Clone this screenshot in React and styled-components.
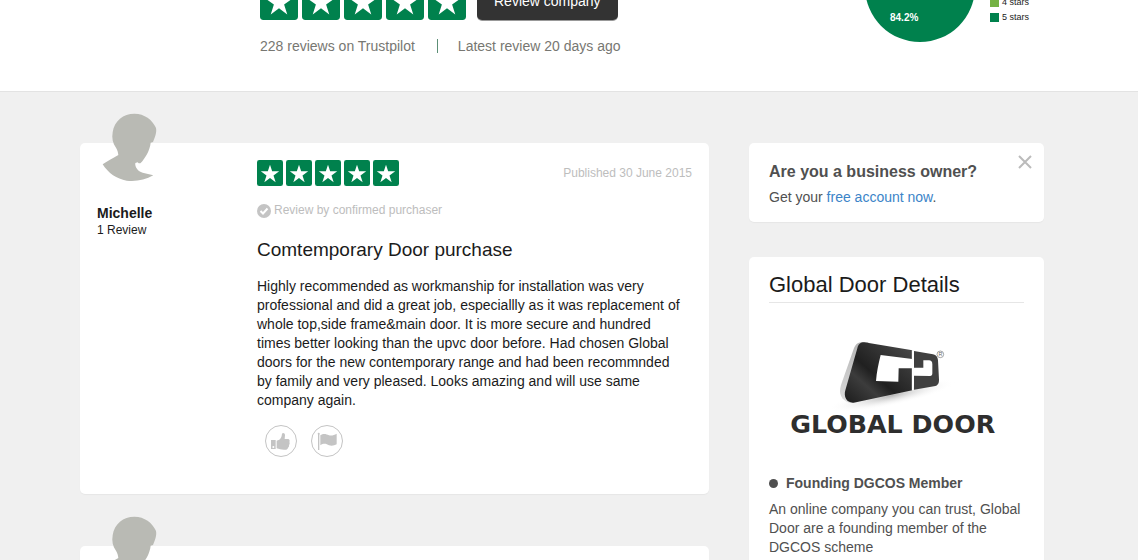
import React from 'react'
import styled, { createGlobalStyle } from 'styled-components'

const GlobalStyle = createGlobalStyle`
  * {
    box-sizing: border-box;
  }

  body {
    margin: 0;
    background-color: #f0f0f0;
    font-family: "Liberation Sans", Arial, sans-serif;
    font-size: 14px;
    line-height: 19px;
    color: #1b1b1b;
  }

  h2, h3, p {
    margin: 0;
  }
`

const reviews = [
  {
    name: "Michelle",
    count: "1 Review",
    date: "Published 30 June 2015",
    title: "Comtemporary Door purchase",
    text: "Highly recommended as workmanship for installation was very professional and did a great job, especiallly as it was replacement of whole top,side frame&main door. It is more secure and hundred times better looking than the upvc door before. Had chosen Global doors for the new contemporary range and had been recommnded by family and very pleased. Looks amazing and will use same company again."
  }
]

function Stars({ size, gap }) {
  return (
    <StarRow $gap={gap} role="img" aria-label="5 stars">
      {[1, 2, 3, 4, 5].map((n) => (
        <svg key={n} width={size} height={size} viewBox="0 0 78 78">
          <rect width="78" height="78" rx="7" fill="#00814d" />
          <path d="M39 14L45.5 34.1L66.6 34L49.5 46.4L56 66.5L39 54L22 66.5L28.5 46.4L11.4 34L32.5 34.1Z" fill="#fff" />
        </svg>
      ))}
    </StarRow>
  )
}

function Avatar() {
  return (
    <AvatarSvg viewBox="51 24 210 225" aria-hidden="true">
      <path
        fill="#b9bab4"
        d="M163 41C194 41 217 60 227 82C231 92 228 106 219 126L212 128C210 150 196 175 181 190H176L173 187L166 189C164 200 174 215 188 218L220 226C196 240 168 245 140 242C110 237 85 220 68 193C82 183 97 175 115 165C114 157 113 151 108 143C98 130 95 115 98 97C103 62 130 41 163 41Z"
      />
    </AvatarSvg>
  )
}

function PieChart() {
  return (
    <svg width="112" height="112" viewBox="0 0 112 112">
      <circle cx="56" cy="56" r="55" fill="#00814d" />
      <path d="M56 56L10 26A55 55 0 0 1 56 1Z" fill="#74b243" stroke="#fff" />
      <text x="26" y="90" fill="#fff" fontSize="10" fontWeight="bold">84.2%</text>
    </svg>
  )
}

function Logo() {
  return (
    <LogoSvg viewBox="-18 0 765 360" role="img" aria-label="Global Door">
      <defs>
        <linearGradient id="door" x1="0" y1="1" x2="1" y2="0">
          <stop offset="0" stopColor="#1c1c1c" />
          <stop offset="0.3" stopColor="#3c3c3c" />
          <stop offset="0.45" stopColor="#202020" />
          <stop offset="1" stopColor="#4c4c4c" />
        </linearGradient>
        <linearGradient id="edge" x1="0" y1="0" x2="0" y2="1">
          <stop offset="0" stopColor="#b5b5b5" />
          <stop offset="1" stopColor="#dcdcdc" />
        </linearGradient>
        <radialGradient id="shade">
          <stop offset="0" stopColor="#b8b8b8" />
          <stop offset="1" stopColor="#fff" stopOpacity="0" />
        </radialGradient>
      </defs>
      <ellipse cx="350" cy="212" rx="195" ry="30" fill="url(#shade)" transform="rotate(-12 350 212)" />
      <path d="M262 52C246 52 241 60 236 72L198 180C190 207 198 224 224 234L250 230L280 52Z" fill="url(#edge)" />
      <path d="M268 52L412 76V196L236 233C216 235 205 216 211 196L247 70C250 57 256 52 268 52Z" fill="url(#door)" />
      <path d="M317 90L412 102V130H371L370 170L303 168C305 142 310 118 317 90Z" fill="#fff" />
      <path d="M417 78L474 88C484 90 488 96 489 106L492 164C492 176 488 182 477 184L417 194V152L465 153C471 153 472 149 472 144V118C472 109 468 106 462 106H445V128H417Z" fill="#404040" />
      <path d="M413 76V196" stroke="#fff" strokeWidth="5" />
      <circle cx="496" cy="88" r="10" fill="none" stroke="#777" strokeWidth="2" />
      <text x="496" y="94" fontSize="16" fill="#666" textAnchor="middle">R</text>
      <Wordmark x="353" y="324">GLOBAL DOOR</Wordmark>
    </LogoSvg>
  )
}

function Review({ review }) {
  return (
    <ReviewCard>
      <Author>
        <Avatar />
        <AuthorName>{review.name}</AuthorName>
        <AuthorCount>{review.count}</AuthorCount>
      </Author>
      <ReviewBody>
        <ReviewTop>
          <Stars size={26} gap={3} />
          <Muted as="time">{review.date}</Muted>
        </ReviewTop>
        <Confirmed>
          <svg width="14" height="14" viewBox="0 0 14 14">
            <circle cx="7" cy="7" r="7" fill="#c4c4c4" />
            <path d="M3.5 7L6 9.5L10.5 4.5" fill="none" stroke="#fff" strokeWidth="2" />
          </svg>
          <Muted>Review by confirmed purchaser</Muted>
        </Confirmed>
        <ReviewTitle>{review.title}</ReviewTitle>
        <ReviewText>{review.text}</ReviewText>
        <Actions>
          <RoundButton type="button" aria-label="Useful">
            <svg width="32" height="32" viewBox="0 0 96 96">
              <path d="M18 45H32V72H18ZM25 63A3 3 0 1 0 25 69A3 3 0 1 0 25 63Z" fillRule="evenodd" />
              <path d="M35 47L43 44C50 38 50 32 51 26C54 22 60 25 60 31L59 42H70C74 43 75 48 73 51C75 54 74 58 72 60C73 64 71 67 69 68C68 72 65 74 61 74C52 75 44 73 35 70Z" />
            </svg>
          </RoundButton>
          <RoundButton type="button" aria-label="Report">
            <svg width="32" height="32" viewBox="0 0 96 96">
              <circle cx="23" cy="26" r="3" />
              <path d="M21 26H25V75H21Z" />
              <path d="M28 31C38 24 46 28 54 31C62 33 70 30 77 26V58C70 62 62 64 54 61C46 56 38 54 28 61Z" />
            </svg>
          </RoundButton>
        </Actions>
      </ReviewBody>
    </ReviewCard>
  )
}

function App() {
  return (
    <>
      <GlobalStyle />
      <Header>
        <Summary>
          <RatingRow>
            <Stars size={38} gap={4} />
            <CompanyButton type="button">Review company</CompanyButton>
          </RatingRow>
          <Stats>
            <span>228 reviews on Trustpilot</span>
            <Divider />
            <span>Latest review 20 days ago</span>
          </Stats>
        </Summary>
        <Chart>
          <PieChart />
          <Legend>
            <LegendItem $color="#74b243">4 stars</LegendItem>
            <LegendItem $color="#00814d">5 stars</LegendItem>
          </Legend>
        </Chart>
      </Header>
      <Page>
        <ReviewList>
          {reviews.map((review) => (
            <Review key={review.name} review={review} />
          ))}
          <ReviewCard>
            <Author>
              <Avatar />
            </Author>
          </ReviewCard>
        </ReviewList>
        <Sidebar>
          <OwnerCard>
            <div>
              <OwnerTitle>Are you a business owner?</OwnerTitle>
              <p>Get your <a href="#account">free account now</a>.</p>
            </div>
            <CloseButton type="button" aria-label="Close">
              <svg width="14" height="14" viewBox="0 0 14 14">
                <path d="M1 1L13 13M13 1L1 13" stroke="#bbb" strokeWidth="2" />
              </svg>
            </CloseButton>
          </OwnerCard>
          <DetailsCard>
            <DetailsTitle>Global Door Details</DetailsTitle>
            <Logo />
            <Bullet>Founding DGCOS Member</Bullet>
            <p>An online company you can trust, Global Door are a founding member of the DGCOS scheme</p>
          </DetailsCard>
        </Sidebar>
      </Page>
    </>
  )
}

export default App

const Header = styled.header`
  height: 92px;
  padding: 0 109px 35px 260px;
  display: flex;
  justify-content: space-between;
  align-items: flex-end;
  overflow: hidden;
  background-color: #fff;
  border-bottom: 1px solid #e3e3e3;
`

const Summary = styled.div`
  display: flex;
  flex-direction: column;
  gap: 16px;
`

const RatingRow = styled.div`
  display: flex;
  align-items: flex-end;
  gap: 11px;
`

const StarRow = styled.div`
  display: flex;
  gap: ${(props) => props.$gap}px;
`

const CompanyButton = styled.button`
  height: 38px;
  padding: 0 17px;
  border: none;
  border-radius: 5px;
  background-color: #333;
  box-shadow: 0 1px 0 #999;
  color: #fff;
  font-family: inherit;
  font-size: 14px;
  cursor: pointer;
`

const Stats = styled.div`
  display: flex;
  align-items: center;
  height: 20px;
  color: #777772;
`

const Divider = styled.span`
  width: 1px;
  height: 14px;
  margin: 0 20px 0 22px;
  background-color: #5c8f76;
`

const Chart = styled.div`
  display: flex;
  align-items: flex-end;
  gap: 14px;
  margin-bottom: 13px;
  font-size: 10px;
`

const Legend = styled.div`
  display: flex;
  flex-direction: column;
  gap: 5px;
  margin-bottom: 21px;
`

const LegendItem = styled.div`
  display: flex;
  align-items: center;
  gap: 3px;
  font-size: 9px;
  line-height: 10px;

  &::before {
    content: "";
    width: 9px;
    height: 9px;
    background-color: ${(props) => props.$color};
  }
`

const Page = styled.main`
  display: flex;
  align-items: flex-start;
  gap: 40px;
  padding: 51px 94px 0 80px;
`

const ReviewList = styled.div`
  flex: 1;
  display: flex;
  flex-direction: column;
  gap: 52px;
`

const Card = styled.section`
  background-color: #fff;
  border-radius: 5px;
  box-shadow: 0 1px 1px #e6e6e6;
`

const ReviewCard = styled(Card)`
  display: flex;
  padding: 17px 17px 37px;
`

const Author = styled.div`
  width: 160px;
  flex-shrink: 0;
`

const AvatarSvg = styled.svg`
  display: block;
  width: 70px;
  height: 75px;
  margin-top: -52px;
  margin-bottom: 21px;
`

const AuthorName = styled.div`
  font-weight: bold;
`

const AuthorCount = styled.div`
  font-size: 12px;
  line-height: 15px;
`

const ReviewBody = styled.div`
  flex: 1;
`

const ReviewTop = styled.div`
  display: flex;
  align-items: center;
  justify-content: space-between;
`

const Muted = styled.span`
  font-size: 12px;
  color: #bdbdbd;
`

const Confirmed = styled.div`
  display: flex;
  align-items: center;
  gap: 3px;
  margin-top: 15px;
`

const ReviewTitle = styled.h3`
  margin: 18px 0 15px;
  font-size: 19px;
  line-height: 24px;
  font-weight: normal;
`

const ReviewText = styled.p`
  padding-right: 8px;
`

const Actions = styled.div`
  display: flex;
  gap: 14px;
  padding: 15px 8px 0;
`

const RoundButton = styled.button`
  width: 32px;
  height: 32px;
  padding: 0;
  display: flex;
  align-items: center;
  justify-content: center;
  border: 1px solid #c4c4c4;
  border-radius: 50%;
  background-color: #fff;
  cursor: pointer;

  svg {
    flex-shrink: 0;
    fill: #c4c4c4;
  }
`

const Sidebar = styled.aside`
  width: 295px;
  flex-shrink: 0;
  display: flex;
  flex-direction: column;
  gap: 35px;
  color: #505050;
`

const OwnerCard = styled(Card)`
  display: flex;
  justify-content: space-between;
  align-items: flex-start;
  padding: 12px 12px 15px 20px;

  a {
    color: #3b84c8;
    text-decoration: none;
  }
`

const OwnerTitle = styled.h3`
  margin: 5px 0 4px;
  font-size: 16px;
  line-height: 24px;
`

const CloseButton = styled.button`
  padding: 0;
  border: none;
  background: none;
  line-height: 0;
  cursor: pointer;
`

const DetailsCard = styled(Card)`
  padding: 13px 20px 20px;
`

const DetailsTitle = styled.h2`
  padding-bottom: 3px;
  border-bottom: 1px solid #e6e6e6;
  font-size: 22px;
  line-height: 29px;
  font-weight: normal;
  color: #1b1b1b;
`

const LogoSvg = styled.svg`
  display: block;
  width: 100%;
  margin: 22px 0 29px;
`

const Wordmark = styled.text`
  font-family: "DejaVu Sans", sans-serif;
  font-size: 76px;
  font-weight: bold;
  text-anchor: middle;
  fill: #2e2e2e;
`

const Bullet = styled.h3`
  display: flex;
  align-items: center;
  gap: 8px;
  margin-bottom: 7px;
  font-size: 14px;

  &::before {
    content: "";
    width: 9px;
    height: 9px;
    border-radius: 50%;
    background-color: #505050;
  }
`
